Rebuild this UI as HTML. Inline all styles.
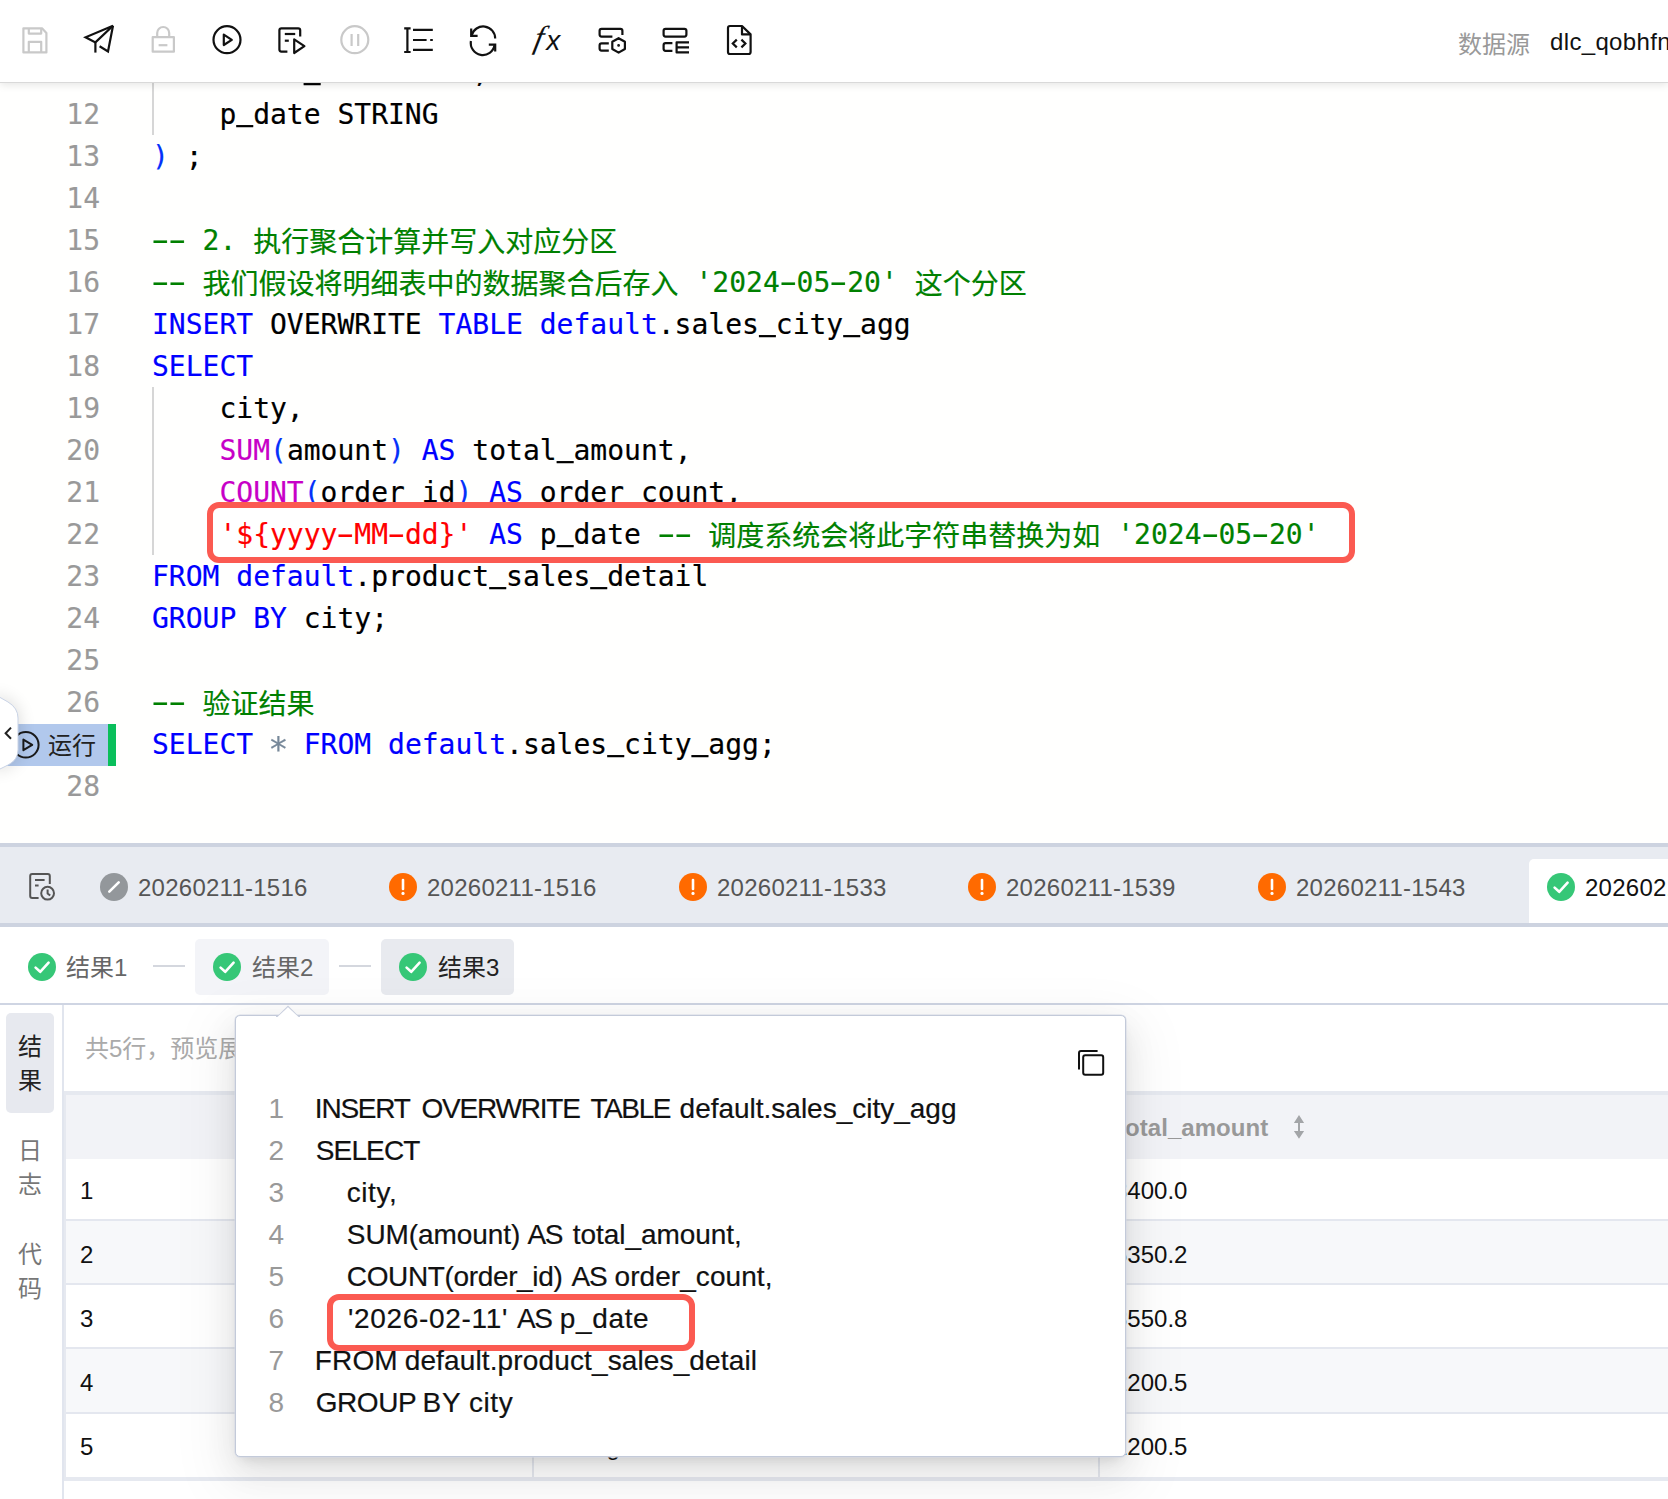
<!DOCTYPE html>
<html lang="zh-CN">
<head>
<meta charset="utf-8">
<title>SQL Editor</title>
<style>
*{box-sizing:border-box;margin:0;padding:0}
html,body{width:1668px;height:1499px;overflow:hidden;background:#fff}
body{position:relative;font-family:"Liberation Sans","Noto Sans CJK SC",sans-serif;color:#111}
.abs{position:absolute}
/* ---------- toolbar ---------- */
#toolbar{position:absolute;left:0;top:0;width:1668px;height:82px;background:#fff;z-index:20;box-shadow:0 1px 0 #d9d9d9,0 3px 8px rgba(0,0,0,.10)}
#toolbar svg{position:absolute;overflow:visible}
.ds-label{position:absolute;left:1458px;top:30px;font-size:24px;line-height:30px;color:#999;white-space:nowrap}
.ds-val{position:absolute;left:1550px;top:26.5px;letter-spacing:.35px;font-size:24px;line-height:30px;color:#111;white-space:nowrap}
/* ---------- editor ---------- */
#editor{position:absolute;left:0;top:82px;width:1668px;height:761px;background:#fffffe;overflow:hidden;z-index:5}
.ln,.cl{position:absolute;height:42px;line-height:42px;font-family:"DejaVu Sans Mono","Liberation Mono","Noto Sans CJK SC",monospace;font-size:28px;white-space:pre}
.ln{left:0;width:100px;text-align:right;color:#999;margin-top:1px;-webkit-text-stroke:.15px}
.cl{left:152px;color:#000;margin-top:1px;-webkit-text-stroke:.18px}
.kw{color:#0000ff}.fn{color:#c700c7}.br{color:#0431fa}.cm{color:#008000}.st{color:#ff0000}.op{color:#778899;display:inline-block;position:relative;top:5px;transform:scale(1.2)}
.hy{display:inline-block;transform:scale(1.85,1.05)}
.us{display:inline-block;transform:scaleY(1.8);transform-origin:50% 40.8px}
.cj{position:relative;top:1.5px}
.guide{position:absolute;left:152px;width:2px;background:#d6d6d6}
#redbox1{position:absolute;left:207px;top:420px;width:1148px;height:61px;border:6px solid #fb5a51;border-radius:12px;background:#fff}
#runbg{position:absolute;left:0;width:108px;height:42px;background:#b1c8ec}
#runbar{position:absolute;left:108px;width:8px;height:42px;background:#0abf5b}
#runtxt{position:absolute;left:48px;height:42px;line-height:42px;font-size:24px;color:#222;white-space:nowrap}
/* ---------- bottom ---------- */
#tabbar{position:absolute;left:0;top:847px;width:1668px;height:76px;background:#e8ebf1;overflow:hidden;z-index:6}
.tabtxt{position:absolute;top:25px;letter-spacing:.25px;height:32px;line-height:32px;font-size:24px;color:#555;white-space:nowrap}
#acttab{position:absolute;left:1529px;top:12px;width:160px;height:70px;background:#fff;border-radius:5px}
#resrow{position:absolute;left:0;top:927px;width:1668px;height:76px;background:#fff;z-index:6}
.restxt{position:absolute;top:25px;height:32px;line-height:32px;font-size:24px;color:#666;white-space:nowrap}
.sep{position:absolute;top:38px;width:32px;height:2px;background:#d4d7de}
.pill{position:absolute;top:12px;height:56px;border-radius:5px}
#panel{position:absolute;left:0;top:1005px;width:1668px;height:494px;background:#fff;overflow:hidden;z-index:6}
.vt{position:absolute;left:6px;width:48px;text-align:center;font-size:24px;line-height:34px;color:#777}
.td{position:absolute;height:64px;line-height:64px;font-size:24px;color:#111;white-space:nowrap}
.th{position:absolute;height:64px;line-height:64px;font-size:24px;font-weight:bold;color:#999;white-space:nowrap}
#popup{position:absolute;left:235px;top:1014.5px;width:890.5px;height:442.5px;background:#fff;border:1px solid #c3cad9;border-radius:5px;box-shadow:0 0 0 .5px #d5dae6,0 18px 56px 16px rgba(0,0,0,.05),0 12px 32px rgba(0,0,0,.09),0 6px 12px -6px rgba(0,0,0,.14);z-index:10}
.pn,.pc{position:absolute;height:42px;line-height:42px;font-size:28px;white-space:pre}
.pn{left:20.5px;width:40px;color:#999;text-align:left;padding-left:12px}
.pc{left:0;width:100%;color:#111;-webkit-text-stroke:.2px #111}
.pc span{position:absolute;top:0}
#redbox2{position:absolute;left:91px;top:278.5px;width:367.5px;height:56.7px;border:6px solid #fb5a51;border-radius:12px;background:#fff}
</style>
</head>
<body>

<!-- ================= TOOLBAR ================= -->
<div id="toolbar">
<svg style="left:0;top:0" width="780" height="82" viewBox="0 0 780 82" fill="none" stroke-width="2.2" stroke-linejoin="round" stroke-linecap="butt">
  <!-- 1 save (disabled) -->
  <g stroke="#c9c9c9">
    <path d="M23.4 28.3 H42 L46.4 33 V52.4 H23.4 Z"/>
    <path d="M28.8 28.3 V33.6 H41.2 V28.3"/>
    <path d="M28.8 52.4 V41.8 H41.2 V52.4"/>
  </g>
  <!-- 2 publish / paper plane -->
  <g stroke="#111" stroke-linejoin="miter">
    <path d="M113 25.8 L85.6 37.3 L95.4 42.4 Z"/>
    <path d="M113 25.8 L108 51.4 L99.6 46.2"/>
    <path d="M95.4 42.4 V52.6"/>
  </g>
  <!-- 3 lock (disabled) -->
  <g stroke="#c9c9c9">
    <rect x="152.7" y="37.2" width="21.2" height="14.5"/>
    <path d="M157.2 37 V33 a6 6 0 0 1 12 0 V37"/>
    <path d="M158.6 45.2 H167.4"/>
  </g>
  <!-- 4 run -->
  <g stroke="#111">
    <circle cx="227" cy="39.7" r="13.5"/>
    <path d="M223.8 34.6 L231.8 39.8 L223.8 45 Z"/>
  </g>
  <!-- 5 run selection -->
  <g stroke="#111">
    <path d="M287.4 51.6 H281.4 a2 2 0 0 1 -2 -2 V30.3 a2 2 0 0 1 2 -2 H298.2 a2 2 0 0 1 2 2 V36.4"/>
    <path d="M284.8 34 H295.2"/>
    <path d="M284.8 40.7 H288.8"/>
    <path d="M294.2 39.4 L304.4 46.2 L294.2 53 Z"/>
  </g>
  <!-- 6 pause (disabled) -->
  <g stroke="#c9c9c9">
    <circle cx="354.8" cy="39.7" r="13.5"/>
    <path d="M351.6 34 V46 M358.2 34 V46"/>
  </g>
  <!-- 7 format -->
  <g stroke="#111">
    <path d="M407.4 28.4 V52 M404.2 28.4 H410.6 M404.2 52 H410.6"/>
    <path d="M413 29.9 H432.8 M413 40 H426.6 M430.2 40 H432.8 M413 49.8 H432.8"/>
  </g>
  <!-- 8 refresh -->
  <g stroke="#111" stroke-linejoin="miter">
    <path d="M471.2 28.6 V35.8 H477.6"/>
    <path d="M471.6 35.4 A12 12 0 0 1 495.2 38.6"/>
    <path d="M495.2 51.4 V44.6 H488.8"/>
    <path d="M494.6 45 A12 12 0 0 1 470.9 41"/>
  </g>
  <!-- 10 config -->
  <g stroke="#111">
    <path d="M612.4 36.6 H601.6 a2 2 0 0 1 -2 -2 V30.8 a2 2 0 0 1 2 -2 H620.4 a2 2 0 0 1 2 2 V35"/>
    <path d="M608.8 43.4 H601.6 a2 2 0 0 0 -2 2 V48.6 a2 2 0 0 0 2 2 H608.8"/>
    <path d="M618.6 38.2 L624.9 41.8 V49 L618.6 52.6 L612.3 49 V41.8 Z"/>
    <circle cx="618.6" cy="45.4" r="0.6" stroke-width="1.6"/>
  </g>
  <!-- 11 layout -->
  <g stroke="#111">
    <rect x="663.6" y="28.8" width="22.8" height="7.8" rx="2"/>
    <path d="M672.4 43.2 H665.6 a2 2 0 0 0 -2 2 V48.8 a2 2 0 0 0 2 2 H672.4"/>
    <path d="M689 42.4 H676.6 V52.4 H689 M676.6 47.4 H689"/>
  </g>
  <!-- 12 file code -->
  <g stroke="#111">
    <path d="M742 26 H730 a2 2 0 0 0 -2 2 V52 a2 2 0 0 0 2 2 H748.6 a2 2 0 0 0 2 -2 V34.4 Z"/>
    <path d="M742 26 V34.4 H750.6"/>
    <path d="M736.8 39.6 L732.8 43.5 L736.8 47.4 M741.4 39.6 L745.4 43.5 L741.4 47.4" stroke-linejoin="miter"/>
  </g>
  <!-- 9 fx -->
  <text transform="translate(532.8 47.5) skewX(-12)" font-size="32" fill="#111" stroke="none" font-family="'Liberation Serif','DejaVu Serif',serif" font-style="italic">f</text>
  <text transform="translate(546.2 49.8)" font-size="28" fill="#111" stroke="none" font-family="'Liberation Sans','DejaVu Sans',sans-serif" font-style="italic">x</text>
</svg>

  <div class="ds-label">数据源</div>
  <div class="ds-val">dlc_qobhfn</div>
</div>

<!-- ================= EDITOR ================= -->
<div id="editor">
<div class="guide" style="top:-31px;height:84px"></div>
<div class="guide" style="top:305px;height:168px"></div>
<div id="runbg" style="top:642px"></div><div id="runbar" style="top:642px"></div>
<div class="ln" style="top:-31px">11</div>
<div class="ln" style="top:11px">12</div>
<div class="ln" style="top:53px">13</div>
<div class="ln" style="top:95px">14</div>
<div class="ln" style="top:137px">15</div>
<div class="ln" style="top:179px">16</div>
<div class="ln" style="top:221px">17</div>
<div class="ln" style="top:263px">18</div>
<div class="ln" style="top:305px">19</div>
<div class="ln" style="top:347px">20</div>
<div class="ln" style="top:389px">21</div>
<div class="ln" style="top:431px">22</div>
<div class="ln" style="top:473px">23</div>
<div class="ln" style="top:515px">24</div>
<div class="ln" style="top:557px">25</div>
<div class="ln" style="top:599px">26</div>
<div class="ln" style="top:683px">28</div>
<div class="cl" style="top:-31px">    order<span class="us">_</span>count INT,</div>
<div class="cl" style="top:11px">    p<span class="us">_</span>date STRING</div>
<div class="cl" style="top:53px"><span class="br">)</span> ;</div>
<div class="cl" style="top:137px"><span class="cm"><span class="hy">-</span><span class="hy">-</span> 2. <span class="cj">执行聚合计算并写入对应分区</span></span></div>
<div class="cl" style="top:179px"><span class="cm"><span class="hy">-</span><span class="hy">-</span> <span class="cj">我们假设将明细表中的数据聚合后存入</span> '2024<span class="hy">-</span>05<span class="hy">-</span>20' <span class="cj">这个分区</span></span></div>
<div class="cl" style="top:221px"><span class="kw">INSERT</span> OVERWRITE <span class="kw">TABLE</span> <span class="kw">default</span>.sales<span class="us">_</span>city<span class="us">_</span>agg</div>
<div class="cl" style="top:263px"><span class="kw">SELECT</span></div>
<div class="cl" style="top:305px">    city,</div>
<div class="cl" style="top:347px">    <span class="fn">SUM</span><span class="br">(</span>amount<span class="br">)</span> <span class="kw">AS</span> total<span class="us">_</span>amount,</div>
<div class="cl" style="top:389px">    <span class="fn">COUNT</span><span class="br">(</span>order<span class="us">_</span>id<span class="br">)</span> <span class="kw">AS</span> order<span class="us">_</span>count,</div>
<div id="redbox1"></div>
<div class="cl" style="top:431px">    <span class="st">'${yyyy<span class="hy">-</span>MM<span class="hy">-</span>dd}'</span> <span class="kw">AS</span> p<span class="us">_</span>date <span class="cm"><span class="hy">-</span><span class="hy">-</span> <span class="cj">调度系统会将此字符串替换为如</span> '2024<span class="hy">-</span>05<span class="hy">-</span>20'</span></div>
<div class="cl" style="top:473px"><span class="kw">FROM</span> <span class="kw">default</span>.product<span class="us">_</span>sales<span class="us">_</span>detail</div>
<div class="cl" style="top:515px"><span class="kw">GROUP</span> <span class="kw">BY</span> city;</div>
<div class="cl" style="top:599px"><span class="cm"><span class="hy">-</span><span class="hy">-</span> <span class="cj">验证结果</span></span></div>
<div class="cl" style="top:641px"><span class="kw">SELECT</span> <span class="op">*</span> <span class="kw">FROM</span> <span class="kw">default</span>.sales<span class="us">_</span>city<span class="us">_</span>agg;</div>
<svg class="abs" style="left:0;top:642px" width="50" height="42" viewBox="0 0 50 42" fill="none" stroke="#1a1a1a" stroke-width="2" stroke-linejoin="round"><circle cx="25.8" cy="20.8" r="12.8"/><path d="M23.4 15.6 L32.2 20.9 L23.4 26.2 Z"/></svg>
<div id="runtxt" style="top:643px">运行</div>
<svg class="abs" style="left:0;top:592px;overflow:visible" width="60" height="120" viewBox="0 0 60 120"><defs><filter id="hs" x="-100%" y="-50%" width="400%" height="200%"><feGaussianBlur stdDeviation="9"/></filter></defs>
<path d="M-6 20 L8 28 Q18 34 18 44 L18 76 Q18 86 8 91 L-6 98 Z" fill="#000" opacity=".16" filter="url(#hs)"/>
<path d="M-6 20 L8 28 Q18 34 18 44 L18 76 Q18 86 8 91 L-6 98 Z" fill="#fff" stroke="#c9d3e6" stroke-width="1"/>
<path d="M11 53.6 L5.6 59.2 L11 64.8" fill="none" stroke="#222" stroke-width="2"/></svg>

</div>

<!-- ================= RESULTS ================= -->
<div class="abs" style="left:0;top:843px;width:1668px;height:4px;background:#cdd3e0;z-index:6"></div>
<div id="tabbar">
<svg class="abs" style="left:28px;top:24px;overflow:visible" width="30" height="32" viewBox="28 871 30 32" fill="none" stroke="#555" stroke-width="2" stroke-linejoin="round"><path d="M38.6 898 H32.2 a2 2 0 0 1 -2 -2 V876 a2 2 0 0 1 2 -2 H47.8 a2 2 0 0 1 2 2 V884"/><path d="M35 880 H44.6 M35 885.6 H38.6"/><circle cx="47.6" cy="893.2" r="6.4"/><path d="M47.6 889.6 V893.4 L50.2 895.6"/></svg>
<svg class="abs" style="left:100px;top:26px" width="28" height="28" viewBox="0 0 28 28"><circle cx="14" cy="14" r="14" fill="#93979b"/><path d="M9.3 18.7 L18.7 9.3" stroke="#fff" stroke-width="2.6" stroke-linecap="round"/></svg>
<div class="tabtxt" style="left:138px">20260211-1516</div>
<svg class="abs" style="left:389px;top:26px" width="28" height="28" viewBox="0 0 28 28"><circle cx="14" cy="14" r="14" fill="#ff6a00"/><path d="M14 7 V16" stroke="#fff" stroke-width="2.6" stroke-linecap="round"/><circle cx="14" cy="20.4" r="1.6" fill="#fff"/></svg>
<div class="tabtxt" style="left:427px">20260211-1516</div>
<svg class="abs" style="left:679px;top:26px" width="28" height="28" viewBox="0 0 28 28"><circle cx="14" cy="14" r="14" fill="#ff6a00"/><path d="M14 7 V16" stroke="#fff" stroke-width="2.6" stroke-linecap="round"/><circle cx="14" cy="20.4" r="1.6" fill="#fff"/></svg>
<div class="tabtxt" style="left:717px">20260211-1533</div>
<svg class="abs" style="left:968px;top:26px" width="28" height="28" viewBox="0 0 28 28"><circle cx="14" cy="14" r="14" fill="#ff6a00"/><path d="M14 7 V16" stroke="#fff" stroke-width="2.6" stroke-linecap="round"/><circle cx="14" cy="20.4" r="1.6" fill="#fff"/></svg>
<div class="tabtxt" style="left:1006px">20260211-1539</div>
<svg class="abs" style="left:1258px;top:26px" width="28" height="28" viewBox="0 0 28 28"><circle cx="14" cy="14" r="14" fill="#ff6a00"/><path d="M14 7 V16" stroke="#fff" stroke-width="2.6" stroke-linecap="round"/><circle cx="14" cy="20.4" r="1.6" fill="#fff"/></svg>
<div class="tabtxt" style="left:1296px">20260211-1543</div>
<div id="acttab"></div>
<svg class="abs" style="left:1547px;top:26px" width="28" height="28" viewBox="0 0 28 28"><circle cx="14" cy="14" r="14" fill="#36c777"/><path d="M7.6 14.6 L12.2 18.8 L20.6 9.6" fill="none" stroke="#fff" stroke-width="2.6" stroke-linecap="round" stroke-linejoin="round"/></svg>
<div class="tabtxt" style="left:1585px;color:#111">20260211-1547</div>
</div>
<div class="abs" style="left:0;top:923px;width:1668px;height:4px;background:#cdd3e0;z-index:6"></div>
<div id="resrow">
<svg class="abs" style="left:28px;top:26px" width="28" height="28" viewBox="0 0 28 28"><circle cx="14" cy="14" r="14" fill="#36c777"/><path d="M7.6 14.6 L12.2 18.8 L20.6 9.6" fill="none" stroke="#fff" stroke-width="2.6" stroke-linecap="round" stroke-linejoin="round"/></svg>
<div class="restxt" style="left:66px">结果1</div>
<div class="sep" style="left:153px"></div>
<div class="pill" style="left:195px;width:134px;background:#f3f4f8"></div>
<svg class="abs" style="left:213px;top:26px" width="28" height="28" viewBox="0 0 28 28"><circle cx="14" cy="14" r="14" fill="#36c777"/><path d="M7.6 14.6 L12.2 18.8 L20.6 9.6" fill="none" stroke="#fff" stroke-width="2.6" stroke-linecap="round" stroke-linejoin="round"/></svg>
<div class="restxt" style="left:252px">结果2</div>
<div class="sep" style="left:339px"></div>
<div class="pill" style="left:381px;width:133px;background:#e8eaef"></div>
<svg class="abs" style="left:399px;top:26px" width="28" height="28" viewBox="0 0 28 28"><circle cx="14" cy="14" r="14" fill="#36c777"/><path d="M7.6 14.6 L12.2 18.8 L20.6 9.6" fill="none" stroke="#fff" stroke-width="2.6" stroke-linecap="round" stroke-linejoin="round"/></svg>
<div class="restxt" style="left:438px;color:#222">结果3</div>
</div>
<div class="abs" style="left:0;top:1003px;width:1668px;height:2px;background:#cfd5e3;z-index:6"></div>
<div id="panel">
<div class="abs" style="left:62px;top:0;width:2px;height:494px;background:#e1e5ee"></div>
<div class="abs" style="left:6px;top:8px;width:48px;height:100px;border-radius:5px;background:#e7e9ef"></div>
<div class="vt" style="top:25px;color:#222">结<br>果</div>
<div class="vt" style="top:129px">日<br>志</div>
<div class="vt" style="top:233px">代<br>码</div>
<div class="abs" style="left:85px;top:28px;font-size:24px;line-height:32px;color:#aaa;white-space:nowrap">共5行，预览展示前5行</div>
<div class="abs" style="left:64px;top:86px;width:2px;height:390px;background:#e6e9f0"></div>
<div class="abs" style="left:66px;top:86px;width:1602px;height:4px;background:#e6e9f0"></div>
<div class="abs" style="left:66px;top:90px;width:1602px;height:64px;background:#f2f3f7"></div>
<div class="abs" style="left:66px;top:154px;width:1602px;height:60px;background:#fff"></div>
<div class="abs" style="left:66px;top:214px;width:1602px;height:2px;background:#e4e7ef"></div>
<div class="td" style="left:80px;top:154px">1</div>
<div class="td" style="left:549px;top:154px">Beijing</div>
<div class="td" style="left:1114px;top:154px">8400.0</div>
<div class="abs" style="left:66px;top:216px;width:1602px;height:62px;background:#f7f8fa"></div>
<div class="abs" style="left:66px;top:278px;width:1602px;height:2px;background:#e4e7ef"></div>
<div class="td" style="left:80px;top:218px">2</div>
<div class="td" style="left:549px;top:218px">Shanghai</div>
<div class="td" style="left:1114px;top:218px">5350.2</div>
<div class="abs" style="left:66px;top:280px;width:1602px;height:62px;background:#fff"></div>
<div class="abs" style="left:66px;top:342px;width:1602px;height:2px;background:#e4e7ef"></div>
<div class="td" style="left:80px;top:282px">3</div>
<div class="td" style="left:549px;top:282px">Guangzhou</div>
<div class="td" style="left:1114px;top:282px">3550.8</div>
<div class="abs" style="left:66px;top:344px;width:1602px;height:63px;background:#f7f8fa"></div>
<div class="abs" style="left:66px;top:407px;width:1602px;height:2px;background:#e4e7ef"></div>
<div class="td" style="left:80px;top:346px">4</div>
<div class="td" style="left:549px;top:346px">Shenzhen</div>
<div class="td" style="left:1114px;top:346px">2200.5</div>
<div class="abs" style="left:66px;top:409px;width:1602px;height:63px;background:#fff"></div>
<div class="td" style="left:80px;top:410px">5</div>
<div class="td" style="left:549px;top:410px">Chengdu</div>
<div class="td" style="left:1114px;top:410px">1200.5</div>
<div class="abs" style="left:66px;top:472px;width:1602px;height:4px;background:#e6e9f0"></div>
<div class="abs" style="left:532px;top:90px;width:2px;height:384px;background:#e6e9f0"></div>
<div class="abs" style="left:1098px;top:90px;width:2px;height:384px;background:#e6e9f0"></div>
<div class="th" style="left:1117px;top:91px;letter-spacing:.05px">total_amount</div>
<div class="th" style="left:549px;top:91px">city</div>
<svg class="abs" style="left:1290px;top:105px" width="18" height="34" viewBox="0 0 18 34"><path d="M9 5.1 L14.1 12.9 H3.9 Z M3.9 20.9 H14.1 L9 28.7 Z M8 12.8 H10 V21 H8 Z" fill="#a3a5a8"/></svg>
</div>
<div id="popup">
<svg class="abs" style="left:40px;top:-11px" width="24" height="12" viewBox="0 0 24 12"><path d="M0 11.5 L2 11.5 L12 1.4 L22 11.5 L24 11.5" fill="#fff" stroke="#c9cfde" stroke-width="1.4"/><path d="M1.5 12 L12 2.2 L22.5 12Z" fill="#fff"/></svg>
<svg class="abs" style="left:840px;top:32.5px;overflow:visible" width="30" height="30" viewBox="0 0 30 30" fill="none" stroke="#111" stroke-width="2" stroke-linejoin="round"><rect x="7.2" y="7.2" width="20" height="19.6" rx="2"/><path d="M3 21.4 V5 a2 2 0 0 1 2 -2 H21.6"/></svg>
<div id="redbox2"></div>
<div class="pn" style="top:72px">1</div>
<div class="pc" style="top:72px"><span style="left:78.8px;letter-spacing:-1.2px">INSERT</span> <span style="left:185.5px;letter-spacing:-1.212px">OVERWRITE</span> <span style="left:354.4px;letter-spacing:-1.375px">TABLE</span> <span style="left:443.6px;letter-spacing:-0.01px">default.sales_city_agg</span></div>
<div class="pn" style="top:114px">2</div>
<div class="pc" style="top:114px"><span style="left:79.8px;letter-spacing:-0.88px">SELECT</span></div>
<div class="pn" style="top:156px">3</div>
<div class="pc" style="top:156px"><span style="left:110.8px;letter-spacing:0.55px">city,</span></div>
<div class="pn" style="top:198px">4</div>
<div class="pc" style="top:198px"><span style="left:110.8px;letter-spacing:-0.08px">SUM(amount)</span> <span style="left:291.4px;letter-spacing:-1.3px">AS</span> <span style="left:336.8px;letter-spacing:-0.05px">total_amount,</span></div>
<div class="pn" style="top:240px">5</div>
<div class="pc" style="top:240px"><span style="left:110.8px;letter-spacing:-0.357px">COUNT(order_id)</span> <span style="left:335.5px;letter-spacing:-1.3px">AS</span> <span style="left:378.5px;letter-spacing:0.064px">order_count,</span></div>
<div class="pn" style="top:282px">6</div>
<div class="pc" style="top:282px"><span style="left:112.1px;letter-spacing:0.664px">'2026-02-11'</span> <span style="left:280.9px;letter-spacing:-1.3px">AS</span> <span style="left:323.8px;letter-spacing:0.64px">p_date</span></div>
<div class="pn" style="top:324px">7</div>
<div class="pc" style="top:324px"><span style="left:78.8px;letter-spacing:0.133px">FROM</span> <span style="left:168.7px;letter-spacing:0.133px">default.product_sales_detail</span></div>
<div class="pn" style="top:366px">8</div>
<div class="pc" style="top:366px"><span style="left:79.8px;letter-spacing:-0.475px">GROUP</span> <span style="left:186.6px;letter-spacing:0.7px">BY</span> <span style="left:232.9px;letter-spacing:0.6px">city</span></div>
</div>


</body>
</html>
